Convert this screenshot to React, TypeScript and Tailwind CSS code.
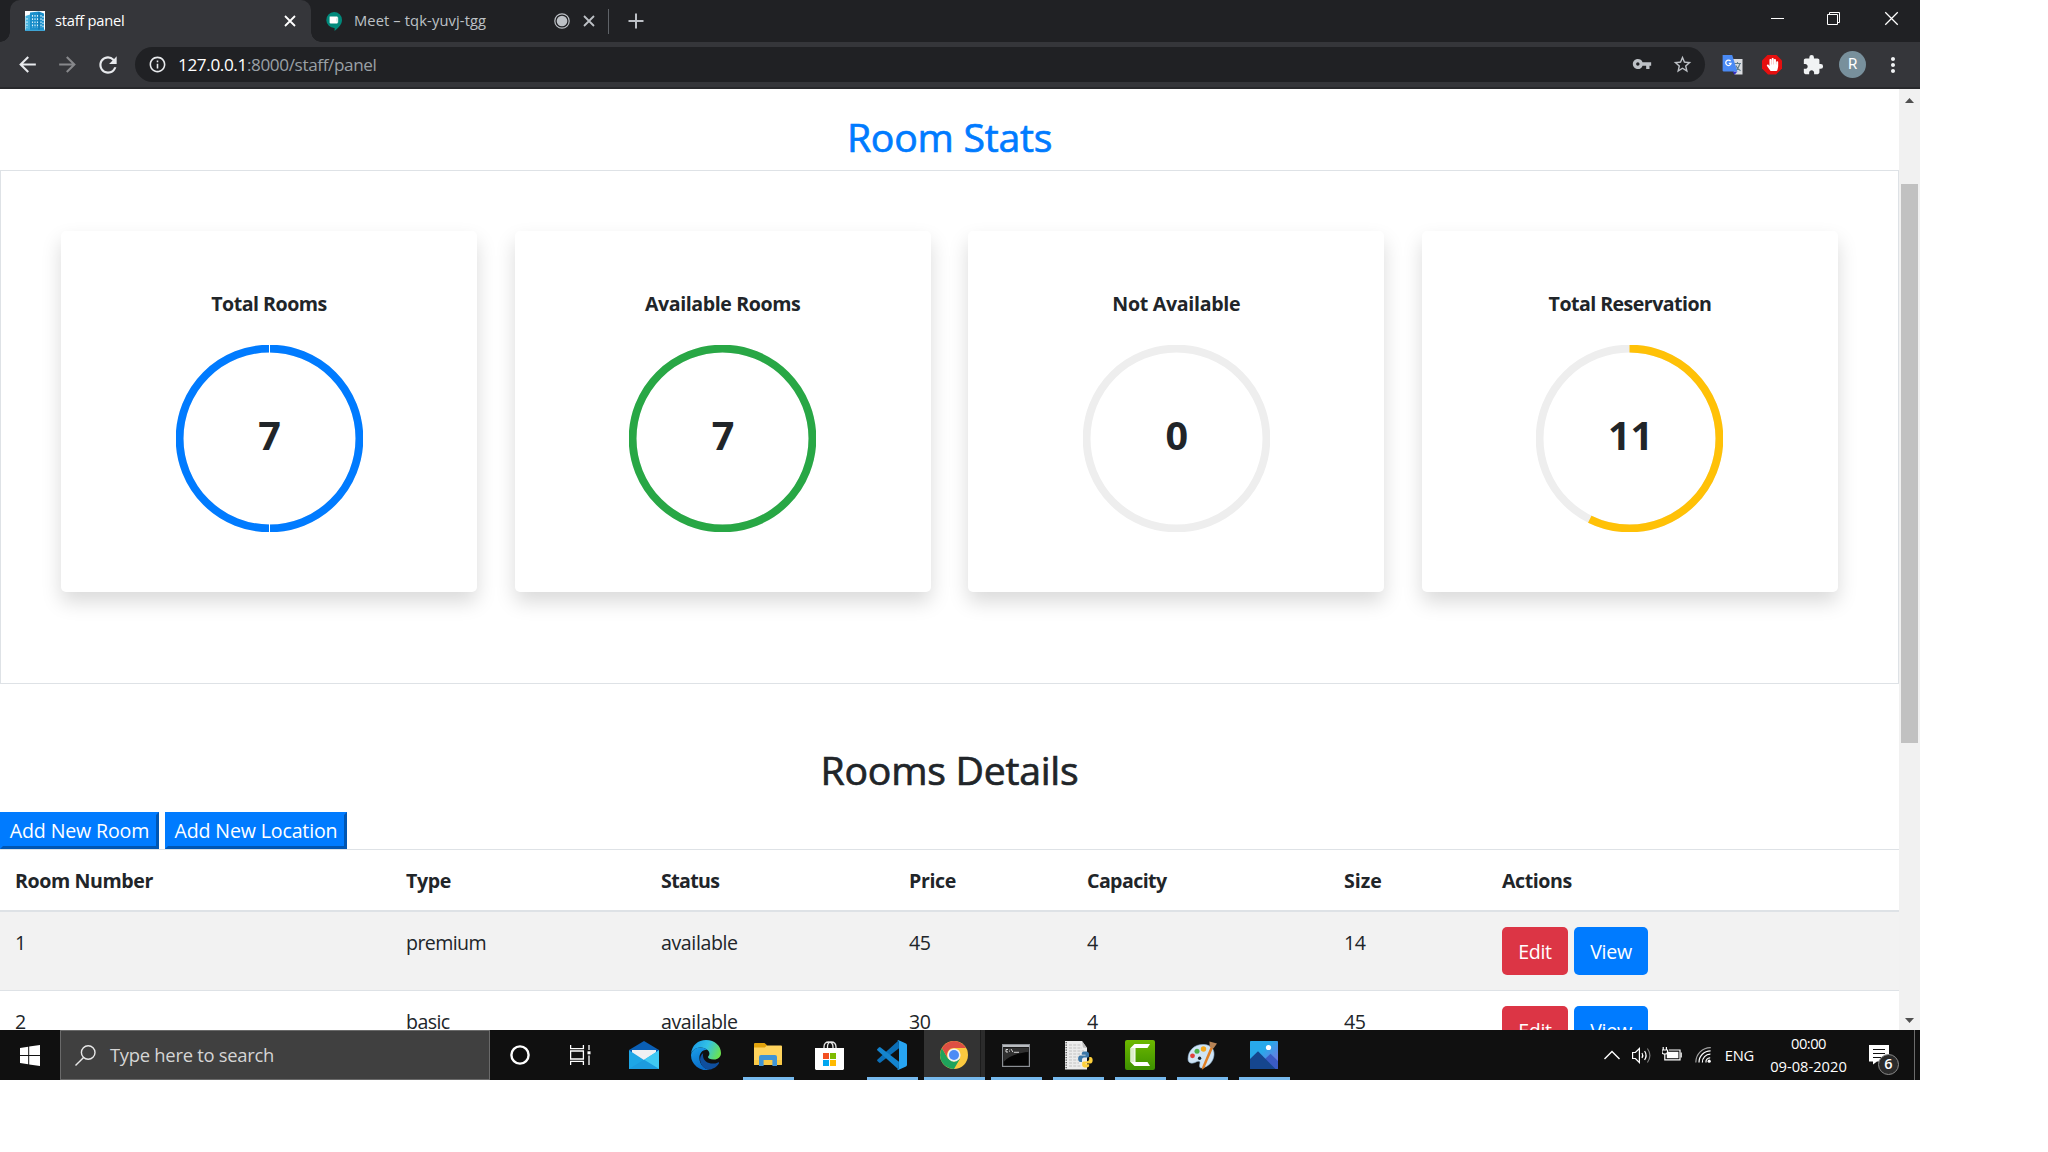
import type { ReactNode } from "react";
import {
  MdArrowBack,
  MdArrowForward,
  MdExtension,
  MdInfoOutline,
  MdMoreVert,
  MdRefresh,
  MdStarBorder,
  MdVpnKey,
} from "react-icons/md";
import { FaHandPaper } from "react-icons/fa";

/* ---------- small drawings ---------- */

function CloseGlyph({ className, size = 12, width = 1.8 }: { className?: string; size?: number; width?: number }) {
  return (
    <svg width={size} height={size} viewBox="0 0 12 12" className={className} stroke="currentColor" strokeWidth={width}>
      <path d="M1 1L11 11M11 1L1 11" />
    </svg>
  );
}

function BuildingIcon() {
  return (
    <svg width="20" height="20" viewBox="0 0 20 20">
      <rect width="20" height="20" fill="#fff" />
      <path d="M5 1.5L14 0.5L19 2.5V19H5Z" fill="#1a8fcb" />
      <path d="M0.5 5L5 3.5V19H0.5Z" fill="#45b3e0" />
      <path d="M14 1V19" stroke="#0c6ea8" strokeWidth="1" />
      <path d="M7.5 4V17M10 4V17M12.5 4V17M16 4V17M18 5V17M2 7V17" stroke="#d9f1fb" strokeWidth="1.1" strokeDasharray="1.7 1.5" />
      <path d="M0 19.3H20" stroke="#2a9ad0" strokeWidth="1.2" />
    </svg>
  );
}

function MeetIcon() {
  return (
    <svg width="16" height="19" viewBox="0 0 16 19">
      <path d="M8 0A8 8 0 0 1 16 8C16 12.5 12.5 15.5 8.6 19V16A8 8 0 0 1 8 0Z" fill="#00897b" />
      <path d="M3.6 4.6H10.8Q11.8 4.6 11.8 5.6V10.4Q11.8 11.4 10.8 11.4H4.6Q3.6 11.4 3.6 10.4Z" fill="#fff" />
      <path d="M10 6.6L12.2 5.4V10.4L10 9.2Z" fill="#d8ece9" />
    </svg>
  );
}

function TranslateIcon() {
  return (
    <svg width="22" height="22" viewBox="0 0 22 22">
      <path d="M9 5H20.5V20.5H12.5Z" fill="#dadce0" />
      <path d="M12 9.5H19M15.5 8V9.5M17.8 9.8C17 13 15 15.5 12.8 16.8M13.8 11.5C14.8 14 16.5 15.8 18.6 16.8" stroke="#607d8b" strokeWidth="1.1" fill="none" />
      <path d="M10.5 17.5L15.4 17.5L12.6 20.8Z" fill="#3730c9" />
      <path d="M1.2 1H10.2L15.4 17.5H1.8Q0.6 17.5 0.6 16.3V1.6Q0.6 1 1.2 1Z" fill="#4a8af4" />
      <path d="M8.6 7.2A2.7 2.7 0 1 0 9.1 9.4H6.8" stroke="#fff" strokeWidth="1.3" fill="none" />
    </svg>
  );
}

function WindowsLogo() {
  return (
    <svg width="20" height="21" viewBox="0 0 20 21" fill="#fff">
      <path d="M0 3L8.2 1.8V10H0ZM9.2 1.6L20 0V10H9.2ZM0 11H8.2V19.2L0 18ZM9.2 11H20V21L9.2 19.4Z" />
    </svg>
  );
}

function MailIcon() {
  return (
    <svg width="30" height="28" viewBox="0 0 30 28">
      <path d="M0 9L15 0L30 9V12H0Z" fill="#0a5fb5" />
      <path d="M3 9H27V20H3Z" fill="#eef0f3" />
      <path d="M0 9.2L15 19L30 9.2V28H0Z" fill="#1da6e6" />
      <path d="M15 18.8L30 9.2V28Z" fill="#3fc9f3" />
      <path d="M0 28L15 18.8L30 28Z" fill="#1b93d9" opacity="0.55" />
    </svg>
  );
}

function EdgeIcon() {
  return (
    <svg width="30" height="30" viewBox="0 0 30 30">
      <defs>
        <linearGradient id="edgeTop" x1="0" y1="0.3" x2="1" y2="0.6">
          <stop offset="0" stopColor="#1a9be8" />
          <stop offset="0.5" stopColor="#33c2e6" />
          <stop offset="1" stopColor="#6be34e" />
        </linearGradient>
        <linearGradient id="edgeSide" x1="0" y1="0" x2="0.4" y2="1">
          <stop offset="0" stopColor="#1aa0ea" />
          <stop offset="1" stopColor="#0a6cc8" />
        </linearGradient>
      </defs>
      <path d="M0 14C1 5 7 0 15 0C24 0 30 6 30 13C30 17 27 19.5 23 19.5C19 19.5 17 18.3 17 17C17 16.2 18.4 15.6 18.4 13.4C18.4 10.6 14.5 7.5 9.5 7.5C4.5 7.5 1 10.5 0 14Z" fill="url(#edgeTop)" />
      <path d="M0 15C0.6 10.5 4.5 7.5 9.5 7.5C12 7.5 14.5 8.4 16 9.7C10.5 9.7 8.4 14 8.4 18C8.4 24 13 29 18.4 29.7A15 15 0 0 1 0 15Z" fill="url(#edgeSide)" />
      <path d="M12.2 13C9.4 15 8.4 18.5 9.4 22C11 27 15 30 19 29.5C23 28.7 26.6 26 28 23.2C28.3 22.4 27.7 22 27 22.4C21 25.4 12 22.6 12 15.5C12 14.5 12 13.6 12.2 13Z" fill="#0f4f9e" />
    </svg>
  );
}

function ExplorerIcon() {
  return (
    <svg width="28" height="24" viewBox="0 0 28 24">
      <path d="M0 1Q0 0 1 0H10.5L13 2.2V6H0Z" fill="#e2a30c" />
      <path d="M0 4.4H10.8L13 2.4H27Q28 2.4 28 3.4V21Q28 22 27 22H0Z" fill="#ffd45e" />
      <path d="M0 17H28V21Q28 22 27 22H0Z" fill="#f9c846" />
      <path d="M5 23V14Q5 12 7 12H21Q23 12 23 14V23H18.4V17H9.6V23Z" fill="#3f94d6" />
    </svg>
  );
}

function StoreIcon() {
  return (
    <svg width="29" height="29" viewBox="0 0 29 29" className="mr-px">
      <path d="M9 8.5V6C9 2.5 11 1 13.5 1C16 1 18 2.5 18 6V8.5M12.5 8V5.5C12.5 2.5 14 1 16 1C18.5 1 21 2.5 21 6V8.5" stroke="#e8e8e8" strokeWidth="1.3" fill="none" />
      <path d="M0 7H29V28L28 29H1L0 28Z" fill="#fff" />
      <rect x="8" y="12" width="6" height="6" fill="#f35022" />
      <rect x="15" y="12" width="6" height="6" fill="#7fbb00" />
      <rect x="8" y="19" width="6" height="6" fill="#01a6f0" />
      <rect x="15" y="19" width="6" height="6" fill="#ffba01" />
    </svg>
  );
}

function CodeIcon() {
  return (
    <svg width="30" height="30" viewBox="0 0 30 30">
      <path d="M22 8.2L3.6 22.6Q2.8 23.2 2 22.5L0.4 21Q-0.3 20.3 0.5 19.5L21.8 0.3Z" fill="#0b6fb8" />
      <path d="M22 21.8L3.6 7.4Q2.8 6.8 2 7.5L0.4 9Q-0.3 9.7 0.5 10.5L21.8 29.7Z" fill="#1484cf" />
      <path d="M21.7 0.2L29 3.6Q30 4.1 30 5.2V24.8Q30 25.9 29 26.4L21.7 29.8Q20.6 30 20 29.3Q22 29.7 22 27.8V2.2Q22 0.3 20 0.7Q20.6 0 21.7 0.2Z" fill="#27a4f2" />
    </svg>
  );
}

function ChromeIcon() {
  return (
    <svg width="28" height="28" viewBox="0 0 28 28">
      <circle cx="14" cy="14" r="14" fill="#fbc93f" />
      <path d="M1.9 7A14 14 0 0 0 14 28L20.1 17.5L14 21L7.9 17.5Z" fill="#1fa35c" />
      <path d="M1.9 7A14 14 0 0 1 26.1 7H14A7 7 0 0 0 7.9 17.5Z" fill="#dd4f43" />
      <circle cx="14" cy="14" r="6.6" fill="#f1f1f1" />
      <circle cx="14" cy="14" r="5" fill="#4c8bf5" />
    </svg>
  );
}

function TerminalIcon() {
  return (
    <svg width="28" height="23" viewBox="0 0 28 23" className="mr-px">
      <rect x="0.6" y="0.6" width="26.8" height="21.8" fill="#050505" stroke="#8b8f94" strokeWidth="1.2" />
      <rect x="1" y="1" width="26" height="2" fill="#b9bcc0" />
      <path d="M1.5 3.5H26.5V8C15 9 7 12 1.5 18Z" fill="#303030" />
      <path d="M6 5.5H4V8H6M7.5 5.8V6.4M7.5 7.4V8M9 5L11 8.2M12 8.3H17" stroke="#e5e5e5" strokeWidth="0.9" fill="none" />
    </svg>
  );
}

function PythonFileIcon() {
  return (
    <svg width="28" height="29" viewBox="0 0 28 29" className="ml-[2px]">
      <path d="M0 0H17L22 7V28.5H0Z" fill="#ececec" />
      <path d="M17 0L18 6.5L22 7Z" fill="#bdbdbd" />
      <path d="M1.2 1V28" stroke="#555" strokeWidth="1.4" strokeDasharray="1.2 1.3" />
      <path d="M4 4H16M4 7H17M4 10H19M4 13H15M4 16H13M4 19H13M4 22H14M4 25H16" stroke="#bcbcbc" strokeWidth="0.9" strokeDasharray="3 1.2" />
      <path d="M20 10.5C16.6 10.5 16.8 12 16.8 13.8H20.6V14.6H15.2C12.4 14.6 12.4 21 15.4 21H17V18.8C17 17 18.4 16.6 20 16.6H22.4C23.6 16.6 24 15.8 24 14.8V12.8C24 11 22.4 10.5 20 10.5Z" fill="#3b77a8" />
      <path d="M21 26.5C24.4 26.5 24.2 25 24.2 23.2H20.4V22.4H25.4C28.4 22.4 28.4 16 25.4 16H24.2V18C24.2 19.8 22.8 20.4 21.2 20.4H18.8C17.6 20.4 17.2 21.2 17.2 22.2V24.2C17.2 26 18.8 26.5 21 26.5Z" fill="#fdd03b" />
    </svg>
  );
}

function CamtasiaIcon() {
  return (
    <svg width="30" height="30" viewBox="0 0 30 30">
      <defs>
        <linearGradient id="cam" x1="0" y1="0" x2="0" y2="1">
          <stop offset="0" stopColor="#6db800" />
          <stop offset="1" stopColor="#3d9200" />
        </linearGradient>
      </defs>
      <rect width="30" height="30" rx="2" fill="url(#cam)" />
      <path d="M9.5 4H25L22.5 8H10.5V22H22.5L25 26H9.5L5.5 22V8Z" fill="#fff" />
      <path d="M5.5 8H9.5V22H5.5Z" fill="#dfeecd" />
    </svg>
  );
}

function PaintIcon() {
  return (
    <svg width="30" height="29" viewBox="0 0 30 29">
      <path d="M1 18C1 9 8 3 17 3.5C24 4 27.5 8 27 14C26.5 20 22 26 14.5 27C12 27.2 12.5 24 13 22C13.3 20 11.5 19.5 9 21C6 22.8 1 23 1 18Z" fill="#cfe4f5" stroke="#8fb4d3" strokeWidth="0.6" />
      <circle cx="12.6" cy="17.3" r="1.7" fill="#18222c" />
      <circle cx="5.5" cy="14.8" r="2.4" fill="#e0413b" />
      <circle cx="10" cy="10.3" r="2.5" fill="#4cb04a" />
      <circle cx="16.5" cy="8" r="2.7" fill="#f4a81d" />
      <path d="M23.6 6L26 7L17.4 27L14.8 28.8L15.4 25.6Z" fill="#e07f24" />
      <path d="M22.4 0.4L30 2.4L26.4 7.4L22.8 6Z" fill="#b78456" />
    </svg>
  );
}

function PhotosIcon() {
  return (
    <svg width="28" height="28" viewBox="0 0 28 28">
      <defs>
        <linearGradient id="sky" x1="0" y1="0" x2="1" y2="1">
          <stop offset="0.4" stopColor="#28a9ea" />
          <stop offset="0.9" stopColor="#7a6fe0" />
        </linearGradient>
      </defs>
      <rect width="28" height="28" rx="0.8" fill="url(#sky)" />
      <path d="M14 19L20.5 12.8L28 20V28H14Z" fill="#3a5bc4" />
      <path d="M0 18L8 10.2L25.5 28H0Z" fill="#15468e" />
      <circle cx="18.5" cy="6.5" r="2.6" fill="#fff" />
    </svg>
  );
}

/* ---------- browser chrome ---------- */

function TabStrip() {
  return (
    <div className="flex h-[42px] items-center bg-[#202124] pl-[10px]">
      <div className="relative flex h-full w-[301px] items-center rounded-t-[10px] bg-[#35363a] pr-[15px] pl-[15px]">
        <span className="absolute bottom-0 -left-[10px] size-[10px] bg-[radial-gradient(circle_at_0_0,#202124_9.5px,#35363a_10px)]" />
        <span className="absolute -right-[10px] bottom-0 size-[10px] bg-[radial-gradient(circle_at_100%_0,#202124_9.5px,#35363a_10px)]" />
        <BuildingIcon />
        <span className="mb-px ml-[10px] text-[14.7px] tracking-[-0.25px] whitespace-nowrap text-white">staff panel</span>
        <CloseGlyph className="ml-auto text-white" />
      </div>
      <div className="flex h-[25px] w-[298px] items-center border-r border-[#5f6368] pr-[13px] pl-[15px]">
        <MeetIcon />
        <span className="mb-px ml-[12px] text-[14.7px] tracking-[0.12px] whitespace-nowrap text-[#bdc1c6]">Meet – tqk-yuvj-tgg</span>
        <svg width="16" height="16" viewBox="0 0 16 16" className="ml-auto">
          <circle cx="8" cy="8" r="7.2" fill="none" stroke="#bdc1c6" strokeWidth="1.2" />
          <circle cx="8" cy="8" r="5.3" fill="#bdc1c6" />
        </svg>
        <CloseGlyph className="ml-[13px] text-[#bdc1c6]" />
      </div>
      <svg width="16" height="16" viewBox="0 0 16 16" className="ml-[19px]" stroke="#bdc1c6" strokeWidth="2">
        <path d="M8 0.5V15.5M0.5 8H15.5" />
      </svg>
      <div className="mb-[5px] ml-auto flex text-white">
        <span className="flex w-[57px] items-center justify-center">
          <span className="h-px w-[13px] bg-white" />
        </span>
        <span className="flex w-[57px] items-center justify-center pr-[2px]">
          <svg width="13" height="13" viewBox="0 0 13 13" fill="none" stroke="currentColor">
            <path d="M0.5 2.5H10.5V12.5H0.5ZM2.5 2.5V0.5H12.5V10.5H10.5" />
          </svg>
        </span>
        <span className="flex w-[57px] items-center justify-center">
          <CloseGlyph size={15} width={1} />
        </span>
      </div>
    </div>
  );
}

function Toolbar() {
  return (
    <div className="flex h-[47px] items-center border-b-2 border-[#28292c] bg-[#35363a] pl-[15px] text-[#e8eaed]">
      <MdArrowBack size={25} />
      <MdArrowForward size={25} className="ml-[15px] text-[#87888b]" />
      <MdRefresh size={26} className="ml-[15px]" />
      <div className="ml-[14px] flex h-[35px] w-[1570px] items-center rounded-full bg-[#202124] pr-[12px] pl-[13px]">
        <MdInfoOutline size={19} />
        <span className="ml-[11px] text-[17.15px] tracking-[-0.38px] whitespace-nowrap text-[#9aa0a6]">
          <span className="text-white">127.0.0.1</span>:8000/staff/panel
        </span>
        <MdVpnKey size={20} className="mb-[2px] ml-auto text-[#bdc1c6]" />
        <MdStarBorder size={21} className="ml-[20px] text-[#bdc1c6]" />
      </div>
      <span className="ml-[16.5px]"><TranslateIcon /></span>
      <span className="ml-[18.5px] flex size-[20px] items-center justify-center bg-[#e60f0f] text-white [clip-path:polygon(30%_0,70%_0,100%_30%,100%_70%,70%_100%,30%_100%,0_70%,0_30%)]">
        <FaHandPaper size={13} />
      </span>
      <MdExtension size={22} className="ml-[20px] text-[#f1f3f4]" />
      <span className="ml-[15px] flex size-[27px] items-center justify-center rounded-full bg-[#78909c] font-['Roboto',sans-serif] text-[15px] text-white">
        R
      </span>
      <MdMoreVert size={24} className="ml-[14.5px] text-[#f1f3f4]" />
    </div>
  );
}

/* ---------- page ---------- */

type Stat = { label: string; tracking: string; value: number; color: string; portion: number; seam?: boolean };

const stats: Stat[] = [
  { label: "Total Rooms", tracking: "tracking-[-0.5px]", value: 7, color: "#007bff", portion: 1, seam: true },
  { label: "Available Rooms", tracking: "tracking-[-0.4px]", value: 7, color: "#28a745", portion: 1 },
  { label: "Not Available", tracking: "tracking-[-0.3px]", value: 0, color: "#eeeeee", portion: 0 },
  { label: "Total Reservation", tracking: "tracking-[-0.55px]", value: 11, color: "#ffc107", portion: 0.573 },
];

function StatCard({ label, tracking, value, color, portion, seam }: Stat) {
  return (
    <div className="flex h-[361px] w-[416px] flex-col items-center rounded-[5px] bg-white pt-[58px] shadow-[0_10px_20px_rgba(0,0,0,0.15)]">
      <h2 className={`text-[19.6px] leading-[30px] font-bold ${tracking}`}>{label}</h2>
      <div className="mt-[26px] grid size-[187px] place-items-center">
        <svg width="187" height="187" viewBox="0 0 187 187" className="col-start-1 row-start-1" fill="none">
          <circle cx="93.5" cy="93.5" r="89.9" stroke="#eeeeee" strokeWidth="7.8" />
          {portion > 0 && (
            <circle
              cx="93.5"
              cy="93.5"
              r="89.9"
              stroke={color}
              strokeWidth="7.8"
              pathLength={1}
              strokeDasharray={`${portion} 1`}
              transform="rotate(-90 93.5 93.5)"
            />
          )}
          {seam && <path d="M93.5 0V9M93.5 178V187" stroke="#fff" strokeWidth="1" />}
        </svg>
        <span className="col-start-1 row-start-1 pb-[7px] pl-px text-[39.5px] leading-[48px] font-bold">{value}</span>
      </div>
    </div>
  );
}

const columns = [
  { name: "Room Number", cls: "w-[391px] tracking-[-0.4px]" },
  { name: "Type", cls: "w-[255px] tracking-[-0.35px]" },
  { name: "Status", cls: "w-[248px] tracking-[-0.65px]" },
  { name: "Price", cls: "w-[178px] tracking-[-0.4px]" },
  { name: "Capacity", cls: "w-[257px] tracking-[-0.6px]" },
  { name: "Size", cls: "w-[158px]" },
  { name: "Actions", cls: "w-[412px] tracking-[-0.45px]" },
];

const rooms = [
  ["1", "premium", "available", "45", "4", "14"],
  ["2", "basic", "available", "30", "4", "45"],
];

function AddButton({ children, cls }: { children: string; cls: string }) {
  return (
    <button
      className={`h-[37px] border-[3px] border-t-[#007bff] border-r-[#0056b3] border-b-[#0056b3] border-l-[#007bff] bg-[#007bff] text-center text-[19.6px] leading-[30px] tracking-[-0.16px] whitespace-nowrap text-white ${cls}`}
    >
      {children}
    </button>
  );
}

function Page() {
  return (
    <main className="w-[1899px] text-[#212529]">
      <h1 className="mt-[24px] mb-[9px] text-center text-[39.2px] leading-[48px] tracking-[-0.25px] text-[#007bff] [-webkit-text-stroke:0.7px_currentColor]">
        Room Stats
      </h1>
      <section className="flex h-[514px] justify-between border border-[#dee2e6] px-[60px] pt-[60px]">
        {stats.map((s) => (
          <StatCard key={s.label} {...s} />
        ))}
      </section>
      <h1 className="mt-[62px] mb-[18px] text-center text-[39.2px] leading-[48px] tracking-[-0.25px] [-webkit-text-stroke:0.7px_currentColor]">
        Rooms Details
      </h1>
      <div className="flex gap-[6px]">
        <AddButton cls="w-[159px]">Add New Room</AddButton>
        <AddButton cls="w-[182px]">Add New Location</AddButton>
      </div>
      <table className="w-[1899px] table-fixed border-separate border-spacing-0 text-[19.6px] leading-[30px]">
        <thead>
          <tr>
            {columns.map((c) => (
              <th key={c.name} className={`border-t border-b-2 border-[#dee2e6] px-[15px] pt-[16px] pb-[14px] text-left font-bold ${c.cls}`}>
                {c.name}
              </th>
            ))}
          </tr>
        </thead>
        <tbody>
          {rooms.map((room, r) => (
            <tr key={room[0]} className="odd:bg-[#f2f2f2]">
              {room.map((cell, i) => (
                <td
                  key={i}
                  className={`border-[#dee2e6] px-[15px] pt-[16px] align-top ${i === 1 ? "tracking-[-0.6px]" : "tracking-[-0.4px]"} ${r > 0 ? "border-t" : ""}`}
                >
                  {cell}
                </td>
              ))}
              <td className={`border-[#dee2e6] px-[15px] py-[15px] align-top ${r > 0 ? "border-t" : ""}`}>
                <div className="flex gap-[6px] tracking-[-0.3px] text-white">
                  <button className="h-[48px] w-[66px] rounded-[5px] bg-[#dc3545] pt-[2px]">Edit</button>
                  <button className="h-[48px] w-[74px] rounded-[5px] bg-[#007bff] pt-[2px]">View</button>
                </div>
              </td>
            </tr>
          ))}
        </tbody>
      </table>
    </main>
  );
}

function ScrollBar() {
  return (
    <div className="flex w-[21px] flex-col items-center bg-[#f1f1f1]">
      <svg width="9" height="5" viewBox="0 0 9 5" className="mt-[9px]">
        <path d="M0 5L4.5 0L9 5Z" fill="#505050" />
      </svg>
      <span className="mt-[81px] h-[559px] w-[17px] bg-[#c1c1c1]" />
      <svg width="9" height="5" viewBox="0 0 9 5" className="mt-auto mb-[7px]">
        <path d="M0 0L4.5 5L9 0Z" fill="#505050" />
      </svg>
    </div>
  );
}

/* ---------- taskbar ---------- */

function TaskCell({ children, open, active }: { children: ReactNode; open?: boolean; active?: boolean }) {
  return (
    <span className="relative flex h-full w-[62px] items-center justify-center">
      {active && (
        <>
          <span className="absolute inset-y-0 right-0 left-px bg-[#333333]" />
          <span className="absolute top-0 right-0 h-full w-[5px] border-l border-[#1c1c1c] bg-black/15" />
          <span className="absolute right-0 bottom-0 left-px h-[3px] bg-[#76b9ed]" />
        </>
      )}
      <span className="relative">{children}</span>
      {open && <span className="absolute bottom-0 left-[6px] h-[3px] w-[51px] bg-[#76b9ed]" />}
    </span>
  );
}

function Taskbar() {
  return (
    <footer className="flex h-[50px] items-center bg-[#101010] text-white">
      <span className="flex w-[60px] justify-center">
        <WindowsLogo />
      </span>
      <div className="flex h-full w-[430px] items-center border border-[#6a6a6a] bg-[#404040] pl-[14px]">
        <svg width="21" height="21" viewBox="0 0 21 21" fill="none" stroke="#e8e8e8" strokeWidth="1.4">
          <circle cx="13.2" cy="7.5" r="6.8" />
          <path d="M8.6 12.4L0.5 20.5" />
        </svg>
        <span className="ml-[14px] text-[18.4px] tracking-[-0.27px] text-[#d5d5d5]">Type here to search</span>
      </div>
      <span className="flex w-[60px] justify-center">
        <svg width="20" height="20" viewBox="0 0 20 20">
          <circle cx="10" cy="10" r="8.6" fill="none" stroke="#fff" strokeWidth="2.4" />
        </svg>
      </span>
      <span className="flex w-[63px] justify-center pr-[3px]">
        <svg width="21" height="20" viewBox="0 0 21 20" fill="none" stroke="#fff" strokeWidth="1.3">
          <path d="M0.6 0V3.6H13.4V0M0.6 20V16.4H13.4V20M0.6 6H13.4V14H0.6ZM19 0V5M19 10.5V20" />
          <rect x="17.5" y="6.3" width="3" height="3" fill="#fff" stroke="none" />
        </svg>
      </span>
      <TaskCell><MailIcon /></TaskCell>
      <TaskCell><EdgeIcon /></TaskCell>
      <TaskCell open><ExplorerIcon /></TaskCell>
      <TaskCell><StoreIcon /></TaskCell>
      <TaskCell open><CodeIcon /></TaskCell>
      <TaskCell active><ChromeIcon /></TaskCell>
      <TaskCell open><TerminalIcon /></TaskCell>
      <TaskCell open><PythonFileIcon /></TaskCell>
      <TaskCell open><CamtasiaIcon /></TaskCell>
      <TaskCell open><PaintIcon /></TaskCell>
      <TaskCell open><PhotosIcon /></TaskCell>

      <div className="ml-auto flex h-full items-center">
        <svg width="16" height="10" viewBox="0 0 16 10" fill="none" stroke="#fff" strokeWidth="1.4">
          <path d="M0.5 9L8 1.5L15.5 9" />
        </svg>
        <svg width="20" height="17" viewBox="0 0 20 17" fill="none" stroke="#fff" strokeWidth="1.2" className="ml-[12px]">
          <path d="M0.6 5.5H3.4L7.4 1.5V15.5L3.4 11.5H0.6Z" />
          <path d="M10 6Q11.6 8.5 10 11M12.6 4Q15.6 8.5 12.6 13" />
          <path d="M15.4 1.5Q20.4 8.5 15.4 15.5" stroke="#7d7d7d" />
        </svg>
        <svg width="20" height="15" viewBox="0 0 20 15" fill="none" stroke="#fff" strokeWidth="1.2" className="mb-px ml-[10px]">
          <path d="M1.2 0V3M4.4 0V3M0 3H5.6V5.2Q5.6 7 2.8 7Q0 7 0 5.2ZM2.8 7V12.8H18V3H7" />
          <rect x="4.8" y="4.8" width="11.6" height="6.4" fill="#fff" stroke="none" />
          <path d="M19.2 5.5V10.5" />
        </svg>
        <svg width="16" height="16" viewBox="0 0 16 16" fill="none" stroke="#fff" strokeWidth="1.2" className="ml-[13px]">
          <path d="M11 15.5A4 4 0 0 1 15.2 10.8M7.4 15.5A7.8 7.8 0 0 1 15.4 7.2M4 15.5A11.5 11.5 0 0 1 15.6 3.8" />
          <path d="M0.8 15.5A14.8 14.8 0 0 1 15.8 0.6" stroke="#a0a0a0" />
          <circle cx="14.2" cy="14.2" r="1.6" fill="#fff" stroke="none" />
        </svg>
        <span className="ml-[14px] text-[14.7px] tracking-[-0.2px]">ENG</span>
        <div className="ml-[16px] flex w-[77px] flex-col items-center text-[14.7px] leading-[23px] whitespace-nowrap">
          <span className="tracking-[-0.5px]">00:00</span>
          <span>09-08-2020</span>
        </div>
        <span className="relative ml-[22px] flex w-[45px]">
          <svg width="20" height="20" viewBox="0 0 20 20">
            <path d="M0 0H20V16.5H8L4 19.5V16.5H0Z" fill="#fff" />
            <path d="M4 4.5H16M4 8.5H16M4 12.5H12" stroke="#101010" strokeWidth="1.2" />
          </svg>
          <span className="absolute top-[9px] left-[9px] flex size-[21px] items-center justify-center rounded-full border border-[#8a8a8a] bg-[#2b2b2b] text-[14.5px] leading-none font-semibold">
            6
          </span>
        </span>
        <span className="mr-[5px] h-full w-px bg-[#6b6b6b]" />
      </div>
    </footer>
  );
}

export default function App() {
  return (
    <div className="h-[1152px] w-[2048px] overflow-hidden bg-white font-['Open_Sans','Noto_Sans',sans-serif]">
      <div className="w-[1920px]">
        <TabStrip />
        <Toolbar />
        <div className="flex h-[941px] overflow-hidden">
          <Page />
          <ScrollBar />
        </div>
        <Taskbar />
      </div>
    </div>
  );
}
